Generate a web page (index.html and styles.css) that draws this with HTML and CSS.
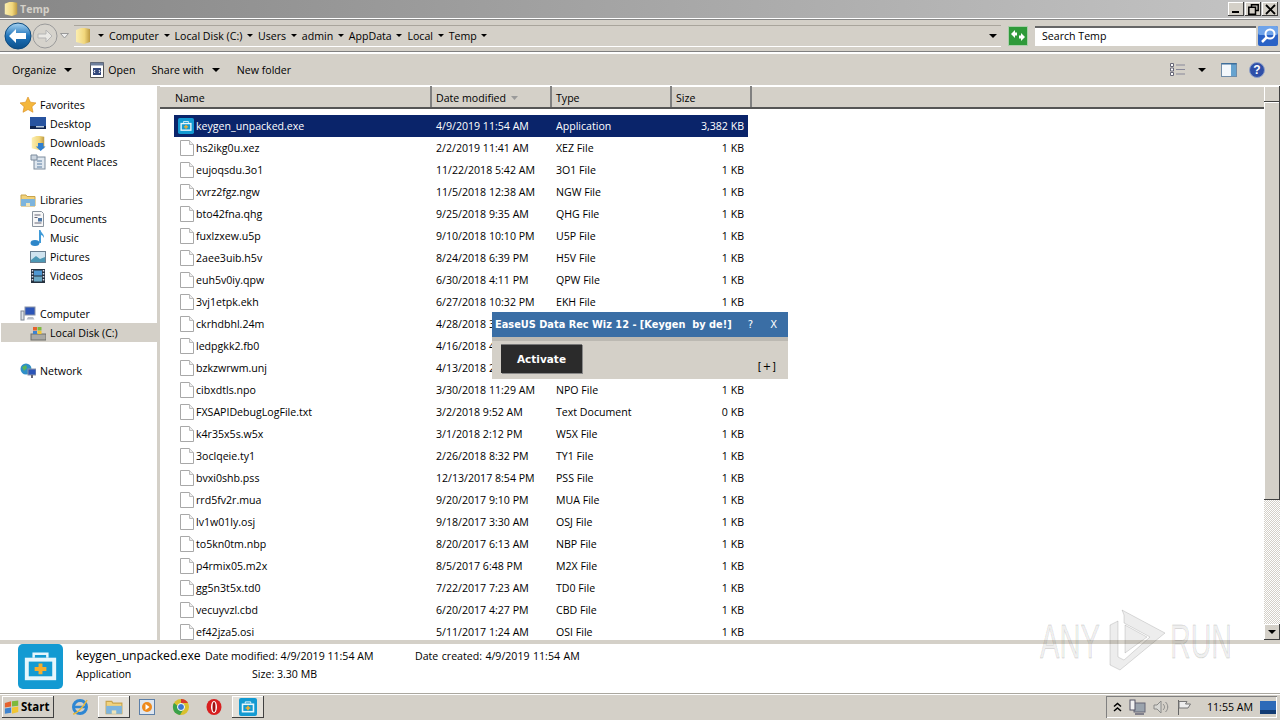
FILE: index.html
```html
<!DOCTYPE html>
<html lang="en">
<head>
<meta charset="utf-8">
<title>Temp</title>
<link rel="stylesheet" href="styles.css">
</head>
<body>
<svg class="defs" width="0" height="0">
  <defs>
    <linearGradient id="backfill" x1="0" y1="0" x2="0" y2="1"><stop offset="0" stop-color="#a9d4f2"/><stop offset=".5" stop-color="#1f74bb"/><stop offset="1" stop-color="#0c4f8a"/></linearGradient>
    <linearGradient id="folderfill" x1="0" y1="0" x2="1" y2="0"><stop offset="0" stop-color="#fbeeb0"/><stop offset=".6" stop-color="#f2d77c"/><stop offset="1" stop-color="#bd9a42"/></linearGradient>
    <symbol id="file" viewBox="0 0 14 16"><path d="M.5.5h9l4 4v11H.5z" fill="#fff" stroke="#a8a8a8"/><path d="M9.5.5v4h4" fill="#eee" stroke="#bbb"/></symbol>
    <symbol id="app" viewBox="0 0 46 46"><rect width="46" height="46" rx="5" fill="#139ad2"/><path d="M16 14v-4h14v4" fill="none" stroke="#e6f6fc" stroke-width="2.5"/><rect x="7" y="14" width="32" height="23" fill="#e6f6fc"/><rect x="11" y="18" width="24" height="15" fill="#139ad2"/><path d="M21 20h4v3.500h4v4h-4V31h-4v-3.500h-4v-4h4z" fill="#f5ad2c"/></symbol>
    <symbol id="folder" viewBox="0 0 16 18"><path d="M1 3l5-2h4l5 1v13l-6 2-8-2z" fill="url(#folderfill)"/></symbol>
  </defs>
</svg>
<div class="window">
  <header class="title">
    <div class="title-left"><svg class="i16" viewBox="0 0 16 18"><use href="#folder"/></svg><span>Temp</span></div>
    <div class="winbtns">
      <span class="winbtn"><i class="min"></i></span>
      <span class="winbtn"><svg width="11" height="11" viewBox="0 0 11 11"><path d="M3.500 2.500V.8h6.700v5.700H8M.8 3.300h6.700v6.900H.8z" fill="none" stroke="#000" stroke-width="1.500"/></svg></span>
      <span class="winbtn"><svg width="11" height="11" viewBox="0 0 11 11"><path d="M1 1l9 9M10 1l-9 9" stroke="#000" stroke-width="1.800"/></svg></span>
    </div>
  </header>
  <div class="address">
    <svg class="back" width="30" height="30" viewBox="0 0 30 30"><circle cx="15" cy="15" r="13" fill="url(#backfill)" stroke="#0d4a7e"/><path d="M6 15l7-7v4h10v6H13v4z" fill="#fff"/></svg>
    <svg class="fwd" width="26" height="26" viewBox="0 0 26 26"><circle cx="13" cy="13" r="12" fill="#d6d3cc" stroke="#9a9a9a"/><path d="M20 13l-6-6v4H6v4h8v4z" fill="#e9e8e4" stroke="#b5b5b5"/></svg>
    <svg class="hist" width="9" height="6" viewBox="0 0 9 6"><path d="M.5.500h8L4.500 5z" fill="#eee" stroke="#999"/></svg>
    <div class="crumbs">
      <svg class="crumb-icon" viewBox="0 0 16 18"><use href="#folder"/></svg>
      <nav class="crumb-list">
        <span class="crumb"><b class="tri"></b>Computer</span>
        <span class="crumb"><b class="tri"></b>Local Disk (C:)</span>
        <span class="crumb"><b class="tri"></b>Users</span>
        <span class="crumb"><b class="tri"></b>admin</span>
        <span class="crumb"><b class="tri"></b>AppData</span>
        <span class="crumb"><b class="tri"></b>Local</span>
        <span class="crumb"><b class="tri"></b>Temp</span>
        <span class="crumb"><b class="tri"></b></span>
      </nav>
      <b class="tri large addr-drop"></b>
    </div>
    <svg class="refresh" width="20" height="20" viewBox="0 0 20 20"><rect x=".5" y=".5" width="19" height="19" fill="#2f9a3a" stroke="#a9cfa9"/><path d="M3 8l4-4v2.500h2v3H7V12zM17 11l-4 4v-2.500h-2v-3h2V7z" fill="#fff"/></svg>
    <div class="search">Search Temp</div>
    <svg class="search-btn" width="20" height="20" viewBox="0 0 20 20"><rect width="20" height="20" rx="2" fill="#2a62c6"/><rect width="20" height="9" rx="2" fill="#6fa4ea"/><circle cx="12" cy="8" r="4.500" fill="none" stroke="#fff" stroke-width="2"/><path d="M9 11l-5 5" stroke="#fff" stroke-width="2.500"/></svg>
  </div>
  <div class="toolbar">
    <div class="tool"><span>Organize</span><b class="tri large"></b></div>
    <div class="tool open"><svg width="16" height="18" viewBox="0 0 16 18"><path d="M1.500 1.500h13v15h-13z" fill="#fff" stroke="#555"/><path d="M1.500 1.500h13v3h-13z" fill="#6e7f9c"/><rect x="4" y="7" width="8" height="7" fill="#33477a"/><path d="M6 9l-1 1.500L6 12M10 9l1 1.500L10 12" stroke="#fff" fill="none"/></svg><span>Open</span></div>
    <div class="tool"><span>Share with</span><b class="tri large"></b></div>
    <div class="tool"><span>New folder</span></div>
    <div class="tool-right">
      <svg width="16" height="13" viewBox="0 0 16 13"><path d="M.5.500h3v3h-3zM.5 5h3v3h-3zM.5 9.500h3v3h-3z" fill="#fff" stroke="#667"/><path d="M6 2h9M6 6.500h9M6 11h9" stroke="#889"/></svg>
      <b class="tri large"></b>
      <svg class="pane" width="16" height="14" viewBox="0 0 16 14"><rect x=".5" y=".5" width="15" height="13" fill="#f3f8fc" stroke="#6f8ca8"/><rect x="10" y="1" width="5" height="12" fill="#66a3cf"/><path d="M.5.500h15" stroke="#3c6d9a" stroke-width="2"/></svg>
      <svg width="16" height="16" viewBox="0 0 16 16"><circle cx="8" cy="8" r="7.500" fill="#2f4fa8" stroke="#8ea0c8"/><text x="8" y="12" text-anchor="middle" class="help">?</text></svg>
    </div>
  </div>
  <main class="body">
    <aside class="nav">
      <section class="nav-group">
        <div class="nav-head"><svg class="i16" viewBox="0 0 16 16"><path d="M8 0l2.400 5.200 5.600.7-4.100 3.800 1.100 5.600L8 12.500l-5 2.800 1.100-5.600L0 5.900l5.600-.7z" fill="#f4b73c" stroke="#d98a1a" stroke-width=".6"/></svg>Favorites</div>
        <div class="nav-item"><svg class="i16" viewBox="0 0 16 16"><rect y="1" width="16" height="12" fill="#27539f"/><rect y="10" width="16" height="3" fill="#10254f"/><rect x="6" y="10" width="8" height="1.500" fill="#bcd"/></svg>Desktop</div>
        <div class="nav-item"><svg class="i16" viewBox="0 0 16 18"><use href="#folder"/><path d="M8 9h6v4h2.500L11 18l-5.500-5H8z" fill="#2f7fd0"/></svg>Downloads</div>
        <div class="nav-item"><svg class="i16" viewBox="0 0 16 16"><rect x="4" y="3" width="11" height="12" fill="#dfe7ef" stroke="#7d8c9d"/><path d="M1 1h6v5H1z" fill="#cdd6e0" stroke="#7d8c9d"/><path d="M7 7h5M7 10h5M7 13h5" stroke="#5b7ca0"/></svg>Recent Places</div>
      </section>
      <section class="nav-group">
        <div class="nav-head"><svg class="i16" viewBox="0 0 16 16"><path d="M1 3h5l1 1.500h8V14H1z" fill="#f1d27c" stroke="#c8a44c"/><path d="M1 7h14v7H1z" fill="#7db4dd"/><path d="M6 14v-3h4v3" fill="#efe4b8"/></svg>Libraries</div>
        <div class="nav-item"><svg class="i16" viewBox="0 0 16 16"><path d="M2.500.5h9l2 2v13h-11z" fill="#f7f7f7" stroke="#8b949e"/><path d="M4.500 4h6M4.500 6.500h3M4.500 12h7" stroke="#667"/><rect x="8" y="7" width="4" height="3.500" fill="#4e78a8"/></svg>Documents</div>
        <div class="nav-item"><svg class="i16" viewBox="0 0 16 16"><ellipse cx="5" cy="13" rx="4.500" ry="3" fill="#2d86c9"/><path d="M9 13V0h1.500c.5 3 4 4 3.500 8-1-2-2-3-3-3v8z" fill="#3f9ad8"/></svg>Music</div>
        <div class="nav-item"><svg class="i16" viewBox="0 0 16 16"><rect x=".5" y="2.500" width="15" height="11" fill="#cfe3ef" stroke="#6b7f90"/><path d="M1 11l5-4 4 3 5-2v5H1z" fill="#4d98b5"/></svg>Pictures</div>
        <div class="nav-item"><svg class="i16" viewBox="0 0 16 16"><rect x="1" y="1" width="14" height="14" fill="#25313f"/><rect x="4" y="2.500" width="8" height="5" fill="#4f97d1"/><rect x="4" y="8.500" width="8" height="5" fill="#6aa7c4"/><path d="M2.500 2v12M13.500 2v12" stroke="#dde" stroke-width="1.500" stroke-dasharray="1.500 1.500"/></svg>Videos</div>
      </section>
      <section class="nav-group">
        <div class="nav-head"><svg class="i16" viewBox="0 0 16 16"><rect x="5" y="1" width="10" height="8" fill="#2c55b8" stroke="#8a93a6"/><path d="M8 11h5l1.500 2.500h-8z" fill="#b8bec8"/><rect x="1" y="5" width="3" height="9" fill="#dfe3e8" stroke="#7d8694"/></svg>Computer</div>
        <div class="nav-item selected"><svg class="i16" viewBox="0 0 16 16"><rect x="1" y="9" width="15" height="6" fill="#a9a9a5" stroke="#6e6e6a"/><rect x="3" y="2" width="4" height="3.500" fill="#e5622e"/><rect x="7.500" y="2" width="4" height="3.500" fill="#7db93c"/><rect x="3" y="6" width="4" height="3" fill="#3d83cf"/><rect x="7.500" y="6" width="4" height="3" fill="#f1c531"/></svg>Local Disk (C:)</div>
      </section>
      <section class="nav-group">
        <div class="nav-head"><svg class="i16" viewBox="0 0 16 16"><circle cx="6" cy="6" r="5.500" fill="#2f8fc8"/><path d="M2 4l4-2 1 3-3 3z" fill="#5ab55a"/><rect x="8" y="6" width="8" height="6" fill="#2c55b8" stroke="#8a93a6"/><path d="M12 12v3" stroke="#667" stroke-width="2"/></svg>Network</div>
      </section>
    </aside>
    <div class="splitter"></div>
    <section class="files">
      <div class="files-main">
        <div class="columns">
          <div class="col c-name">Name</div>
          <div class="col c-date">Date modified<svg class="sort" width="7" height="4" viewBox="0 0 7 4"><path d="M0 0h7L3.500 4z" fill="#9a9a9a"/></svg></div>
          <div class="col c-type">Type</div>
          <div class="col c-size">Size</div>
          <div class="col c-rest"></div>
        </div>
        <div class="rows">
          <div class="row active"><div class="c-name cell"><svg class="ficon" viewBox="0 0 46 46"><use href="#app"/></svg>keygen_unpacked.exe</div><div class="c-date cell">4/9/2019 11:54 AM</div><div class="c-type cell">Application</div><div class="c-size cell num">3,382 KB</div></div>
          <div class="row"><div class="c-name cell"><svg class="ficon doc" viewBox="0 0 14 16"><use href="#file"/></svg>hs2ikg0u.xez</div><div class="c-date cell">2/2/2019 11:41 AM</div><div class="c-type cell">XEZ File</div><div class="c-size cell num">1 KB</div></div>
          <div class="row"><div class="c-name cell"><svg class="ficon doc" viewBox="0 0 14 16"><use href="#file"/></svg>eujoqsdu.3o1</div><div class="c-date cell">11/22/2018 5:42 AM</div><div class="c-type cell">3O1 File</div><div class="c-size cell num">1 KB</div></div>
          <div class="row"><div class="c-name cell"><svg class="ficon doc" viewBox="0 0 14 16"><use href="#file"/></svg>xvrz2fgz.ngw</div><div class="c-date cell">11/5/2018 12:38 AM</div><div class="c-type cell">NGW File</div><div class="c-size cell num">1 KB</div></div>
          <div class="row"><div class="c-name cell"><svg class="ficon doc" viewBox="0 0 14 16"><use href="#file"/></svg>bto42fna.qhg</div><div class="c-date cell">9/25/2018 9:35 AM</div><div class="c-type cell">QHG File</div><div class="c-size cell num">1 KB</div></div>
          <div class="row"><div class="c-name cell"><svg class="ficon doc" viewBox="0 0 14 16"><use href="#file"/></svg>fuxlzxew.u5p</div><div class="c-date cell">9/10/2018 10:10 PM</div><div class="c-type cell">U5P File</div><div class="c-size cell num">1 KB</div></div>
          <div class="row"><div class="c-name cell"><svg class="ficon doc" viewBox="0 0 14 16"><use href="#file"/></svg>2aee3uib.h5v</div><div class="c-date cell">8/24/2018 6:39 PM</div><div class="c-type cell">H5V File</div><div class="c-size cell num">1 KB</div></div>
          <div class="row"><div class="c-name cell"><svg class="ficon doc" viewBox="0 0 14 16"><use href="#file"/></svg>euh5v0iy.qpw</div><div class="c-date cell">6/30/2018 4:11 PM</div><div class="c-type cell">QPW File</div><div class="c-size cell num">1 KB</div></div>
          <div class="row"><div class="c-name cell"><svg class="ficon doc" viewBox="0 0 14 16"><use href="#file"/></svg>3vj1etpk.ekh</div><div class="c-date cell">6/27/2018 10:32 PM</div><div class="c-type cell">EKH File</div><div class="c-size cell num">1 KB</div></div>
          <div class="row"><div class="c-name cell"><svg class="ficon doc" viewBox="0 0 14 16"><use href="#file"/></svg>ckrhdbhl.24m</div><div class="c-date cell">4/28/2018 3:15 PM</div><div class="c-type cell">24M File</div><div class="c-size cell num">1 KB</div></div>
          <div class="row"><div class="c-name cell"><svg class="ficon doc" viewBox="0 0 14 16"><use href="#file"/></svg>ledpgkk2.fb0</div><div class="c-date cell">4/16/2018 4:20 PM</div><div class="c-type cell">FB0 File</div><div class="c-size cell num">1 KB</div></div>
          <div class="row"><div class="c-name cell"><svg class="ficon doc" viewBox="0 0 14 16"><use href="#file"/></svg>bzkzwrwm.unj</div><div class="c-date cell">4/13/2018 2:05 PM</div><div class="c-type cell">UNJ File</div><div class="c-size cell num">1 KB</div></div>
          <div class="row"><div class="c-name cell"><svg class="ficon doc" viewBox="0 0 14 16"><use href="#file"/></svg>cibxdtls.npo</div><div class="c-date cell">3/30/2018 11:29 AM</div><div class="c-type cell">NPO File</div><div class="c-size cell num">1 KB</div></div>
          <div class="row"><div class="c-name cell"><svg class="ficon doc" viewBox="0 0 14 16"><use href="#file"/></svg>FXSAPIDebugLogFile.txt</div><div class="c-date cell">3/2/2018 9:52 AM</div><div class="c-type cell">Text Document</div><div class="c-size cell num">0 KB</div></div>
          <div class="row"><div class="c-name cell"><svg class="ficon doc" viewBox="0 0 14 16"><use href="#file"/></svg>k4r35x5s.w5x</div><div class="c-date cell">3/1/2018 2:12 PM</div><div class="c-type cell">W5X File</div><div class="c-size cell num">1 KB</div></div>
          <div class="row"><div class="c-name cell"><svg class="ficon doc" viewBox="0 0 14 16"><use href="#file"/></svg>3oclqeie.ty1</div><div class="c-date cell">2/26/2018 8:32 PM</div><div class="c-type cell">TY1 File</div><div class="c-size cell num">1 KB</div></div>
          <div class="row"><div class="c-name cell"><svg class="ficon doc" viewBox="0 0 14 16"><use href="#file"/></svg>bvxi0shb.pss</div><div class="c-date cell">12/13/2017 8:54 PM</div><div class="c-type cell">PSS File</div><div class="c-size cell num">1 KB</div></div>
          <div class="row"><div class="c-name cell"><svg class="ficon doc" viewBox="0 0 14 16"><use href="#file"/></svg>rrd5fv2r.mua</div><div class="c-date cell">9/20/2017 9:10 PM</div><div class="c-type cell">MUA File</div><div class="c-size cell num">1 KB</div></div>
          <div class="row"><div class="c-name cell"><svg class="ficon doc" viewBox="0 0 14 16"><use href="#file"/></svg>lv1w01ly.osj</div><div class="c-date cell">9/18/2017 3:30 AM</div><div class="c-type cell">OSJ File</div><div class="c-size cell num">1 KB</div></div>
          <div class="row"><div class="c-name cell"><svg class="ficon doc" viewBox="0 0 14 16"><use href="#file"/></svg>to5kn0tm.nbp</div><div class="c-date cell">8/20/2017 6:13 AM</div><div class="c-type cell">NBP File</div><div class="c-size cell num">1 KB</div></div>
          <div class="row"><div class="c-name cell"><svg class="ficon doc" viewBox="0 0 14 16"><use href="#file"/></svg>p4rmix05.m2x</div><div class="c-date cell">8/5/2017 6:48 PM</div><div class="c-type cell">M2X File</div><div class="c-size cell num">1 KB</div></div>
          <div class="row"><div class="c-name cell"><svg class="ficon doc" viewBox="0 0 14 16"><use href="#file"/></svg>gg5n3t5x.td0</div><div class="c-date cell">7/22/2017 7:23 AM</div><div class="c-type cell">TD0 File</div><div class="c-size cell num">1 KB</div></div>
          <div class="row"><div class="c-name cell"><svg class="ficon doc" viewBox="0 0 14 16"><use href="#file"/></svg>vecuyvzl.cbd</div><div class="c-date cell">6/20/2017 4:27 PM</div><div class="c-type cell">CBD File</div><div class="c-size cell num">1 KB</div></div>
          <div class="row"><div class="c-name cell"><svg class="ficon doc" viewBox="0 0 14 16"><use href="#file"/></svg>ef42jza5.osi</div><div class="c-date cell">5/11/2017 1:24 AM</div><div class="c-type cell">OSI File</div><div class="c-size cell num">1 KB</div></div>
        </div>
      </div>
      <div class="scrollbar">
        <div class="sb-btn"><b class="tri up"></b></div>
        <div class="sb-thumb"></div>
        <div class="sb-track"></div>
        <div class="sb-btn"><b class="tri large"></b></div>
      </div>
    </section>
  </main>
  <div class="details">
    <svg class="details-icon" viewBox="0 0 46 46"><use href="#app"/></svg>
    <div class="details-col d-name"><div class="d-title">keygen_unpacked.exe</div><div>Application</div></div>
    <div class="details-col d-meta"><div>Date modified: 4/9/2019 11:54 AM</div><div class="d-size">Size: 3.30 MB</div></div>
    <div class="details-col d-created"><div>Date created: 4/9/2019 11:54 AM</div></div>
  </div>
</div>
<footer class="taskbar">
  <div class="start"><svg width="16" height="15" viewBox="0 0 18 16"><path d="M1 3l7-2v6l-7 1z" fill="#e5622e"/><path d="M9 1l7-1v6l-7 1z" fill="#7db93c"/><path d="M1 9l7-1v6l-7 1z" fill="#3d83cf"/><path d="M9 8l7-1v6l-7 2z" fill="#f1c531"/></svg><span>Start</span></div>
  <div class="task"><svg width="18" height="18" viewBox="0 0 18 18"><circle cx="9" cy="9" r="6.500" fill="none" stroke="#2d86d3" stroke-width="3"/><path d="M3 9h12" stroke="#2d86d3" stroke-width="2.500"/><path d="M2 16c3 0 10-6 14-14" stroke="#e8b93a" fill="none" stroke-width="1.500"/></svg></div>
  <div class="task raised"><svg width="18" height="18" viewBox="0 0 16 16"><path d="M1 3h5l1 1.500h8V14H1z" fill="#f1d27c" stroke="#c8a44c"/><path d="M1 7h14v7H1z" fill="#7db4dd"/><path d="M6 14v-3h4v3" fill="#efe4b8"/></svg></div>
  <div class="task"><svg width="18" height="18" viewBox="0 0 18 18"><rect x="1.500" y="1.500" width="15" height="15" fill="#dfe6ef" stroke="#5c7fa8"/><circle cx="9" cy="9" r="5" fill="#ee8a1d"/><path d="M7.500 6l4 3-4 3z" fill="#fff"/></svg></div>
  <div class="task"><svg width="18" height="18" viewBox="0 0 18 18"><circle cx="9" cy="9" r="8" fill="#d9c02e"/><path d="M9 1a8 8 0 0 1 7 4H9z" fill="#d8392c"/><path d="M2 5a8 8 0 0 0 6 12l3-5z" fill="#3ba14a"/><circle cx="9" cy="9" r="3.500" fill="#3a78d0" stroke="#fff"/></svg></div>
  <div class="task"><svg width="18" height="18" viewBox="0 0 18 18"><ellipse cx="9" cy="9" rx="7.500" ry="8" fill="#d81f1f"/><ellipse cx="9" cy="9" rx="3" ry="6" fill="#fff"/><ellipse cx="9" cy="9" rx="1.500" ry="5" fill="#a01010"/></svg></div>
  <div class="task raised"><svg width="18" height="18" viewBox="0 0 46 46"><use href="#app"/></svg></div>
  <div class="tray">
    <svg width="9" height="10" viewBox="0 0 9 10"><path d="M1 4.500l3.500-3 3.500 3M1 9l3.500-3 3.500 3" fill="none" stroke="#000" stroke-width="1.500"/></svg>
    <svg class="t1" width="17" height="16" viewBox="0 0 17 16"><rect x="5" y="4" width="11" height="9" fill="#9aa3ad" stroke="#667"/><rect x="1" y="1" width="5" height="10" fill="#f2f2f2" stroke="#556"/><path d="M6 15h9" stroke="#667" stroke-width="1.500"/></svg>
    <svg class="t2" width="16" height="14" viewBox="0 0 16 14"><path d="M1 5h3l4-4v12l-4-4H1z" fill="#d8d8d4" stroke="#8a8a88"/><path d="M10 4c2 2 2 4 0 6M12.500 2c3 3 3 7 0 10" fill="none" stroke="#8a8a88"/></svg>
    <svg class="t3" width="16" height="15" viewBox="0 0 16 15"><path d="M1.500 0v15" stroke="#666"/><path d="M2 1.500h8l-1.500 2.500 5 0 L11 8H2z" fill="#eee" stroke="#777"/></svg>
    <span class="clock">11:55 AM</span>
    <svg width="16" height="13" viewBox="0 0 16 13"><rect width="16" height="13" fill="#2d6ab8"/><rect y="9" width="16" height="4" fill="#123b73"/></svg>
  </div>
</footer>
<aside class="dialog">
  <div class="dlg-title"><span>EaseUS Data Rec Wiz 12 - [Keygen&nbsp; by de!]</span><span class="dlg-q">?</span><span class="dlg-x">X</span></div>
  <div class="dlg-body"><div class="activate">Activate</div><span class="plus">[+]</span></div>
</aside>
<svg class="watermark" width="240" height="76" viewBox="0 0 240 76">
  <text x="4" y="58" class="wm" textLength="60" lengthAdjust="spacingAndGlyphs">ANY</text>
  <path class="wm-logo" d="M86 10l43 23-45 37-10-5V25l8-4v36l6 3 26-23-26-14v-8zM89 25l22 12-22 16z"/>
  <text x="134" y="58" class="wm" textLength="62" lengthAdjust="spacingAndGlyphs">RUN</text>
</svg>
</body>
</html>
```
FILE: styles.css
```css
* { box-sizing: border-box; }
html, body { margin: 0; height: 100%; }
body {
  width: 1280px; height: 720px; overflow: hidden; position: relative;
  display: flex; flex-direction: column; background: #fff; color: #000;
  font: 10.6px/14px "Open Sans", "Liberation Sans", sans-serif;
}
.defs { position: absolute; }
svg { flex: none; display: block; }
.i16 { width: 16px; height: 16px; }

.window { height: 693px; display: flex; flex-direction: column; }

.title {
  height: 18px; flex: none; display: flex; justify-content: space-between;
  background: linear-gradient(90deg, #878787, #c4c4c4);
  color: #d4d0c8; font-weight: 700; padding: 0 2px 0 3px;
}
.title-left { display: flex; align-items: center; gap: 1px; }
.winbtns { display: flex; gap: 1px; padding-top: 2px; }
.winbtn {
  width: 16px; height: 14px; background: #d4d0c8; display: flex; align-items: center; justify-content: center;
  box-shadow: inset -1px -1px #404040, inset 1px 1px #fff;
}
.min { width: 7px; height: 2px; background: #000; margin-top: 6px; margin-right: 2px; }

.address {
  height: 36px; flex: none; display: flex; align-items: center; background: #d4d0c8; padding: 0 0 0 3px;
  border-top: 1px solid #fff; border-bottom: 2px solid #fff;
  box-shadow: inset 0 1px #888, inset 0 -1px #808080;
}
.fwd { margin-left: -1px; }
.hist { margin-left: 2px; margin-right: 5px; }
.crumbs {
  width: 927px; height: 22px; display: flex; align-items: center; padding: 0 0 0 1px;
  border-top: 1px solid #a9a59c; border-bottom: 1px solid #fff;
}
.crumb-icon { width: 16px; height: 18px; }
.crumb-list { display: flex; margin-left: 7px; flex: 1; }
.crumb { display: flex; align-items: center; margin-right: 4.7px; white-space: nowrap; }
.tri { display: block; width: 0; height: 0; border: 3px solid transparent; border-top: 3px solid #000; border-bottom: 0; margin-right: 5px; }
.tri.large { border-width: 4px 4px 0; border-top-color: #000; margin: 0; }
.tri.up { border-width: 0 4px 4px; border-color: transparent transparent #000; margin: 0; }
.tri.large.addr-drop { margin-right: 4px; }
.refresh { margin-left: 7px; }
.search {
  width: 221px; height: 20px; margin-left: 7px; padding: 0 7px; background: #fff;
  border-top: 2px solid #666; line-height: 17px;
}
.search-btn { margin-left: 2px; }

.toolbar {
  height: 31px; flex: none; display: flex; align-items: center; background: #d4d0c8; padding: 0 15px 0 12px;
}
.tool { display: flex; align-items: center; gap: 8px; margin-right: 17px; }
.tool.open { gap: 3px; margin-right: 16px; }
.tool-right { margin-left: auto; display: flex; align-items: center; }
.tool-right .tri { margin: 0 15px 0 12px; }
.tool-right .pane { margin-right: 12px; }
.help { font: bold 12px "Liberation Sans", sans-serif; fill: #fff; }

.body { flex: 1; min-height: 0; display: flex; border-top: 1px solid #fff; }
.nav { width: 157px; flex: none; padding-top: 9px; background: #fff; overflow: hidden; }
.nav-group { margin-bottom: 19px; }
.nav-head, .nav-item { height: 19px; display: flex; align-items: center; gap: 4px; }
.nav-head { padding-left: 20px; }
.nav-item { padding-left: 30px; }
.nav-item.selected { background: #d4d0c8; margin-left: 1px; padding-left: 29px; }
.splitter { width: 3px; flex: none; background: #d4d0c8; }

.files { flex: 1; min-width: 0; display: flex; }
.files-main { flex: 1; min-width: 0; display: flex; flex-direction: column; overflow: hidden; }
.columns { height: 23px; flex: none; display: flex; background: #d4d0c8; border-bottom: 2px solid #555; }
.col { height: 21px; display: flex; align-items: center; gap: 5px; padding: 3px 0 0 4px; border-right: 2px solid; border-right-color: #808080; box-shadow: inset 0 1px #fff; }
.col.c-name { padding-left: 15px; }
.col.c-rest { flex: 1; border: 0; }
.c-name { width: 272px; }
.c-date { width: 120px; }
.c-type { width: 120px; }
.c-size { width: 80px; }
.rows { padding-top: 6px; padding-left: 14px; }
.row { height: 22px; display: flex; width: 574px; }
.cell { display: flex; align-items: center; white-space: nowrap; padding-left: 4px; }
.row .c-name { width: 258px; gap: 2px; padding-left: 4px; }
.row .c-date { width: 120px; padding-left: 4px; }
.row .c-type { width: 120px; padding-left: 4px; }
.row .c-size { width: 76px; justify-content: flex-end; padding-right: 4px; }
.ficon { width: 16px; height: 16px; }
.ficon.doc { width: 14px; height: 16px; margin: 0 0 0 2px; }
.row.active { background: #0a246a; color: #fff; }

.scrollbar { width: 16px; flex: none; display: flex; flex-direction: column; background: repeating-conic-gradient(#d4d0c8 0 25%, #fff 0 50%) 0 0 / 2px 2px; }
.sb-btn { height: 16px; flex: none; display: flex; align-items: center; justify-content: center; background: #d4d0c8; box-shadow: inset -1px -1px #404040, inset 1px 1px #fff; }
.sb-thumb { height: 398px; flex: none; background: #d4d0c8; box-shadow: inset -1px -1px #404040, inset 1px 1px #fff; }
.sb-track { flex: 1; }

.details {
  height: 53px; flex: none; display: flex; background: #fff; align-items: flex-start;
  border-top: 4px solid #d4d0c8;
}
.details-icon { width: 45px; height: 45px; margin: 0 0 0 18px; flex: none; }
.details-col div { height: 18px; line-height: 18px; white-space: nowrap; }
.details-col { padding-top: 3px; }
.d-name { margin-left: 13px; width: 129px; }
.d-title { font-size: 12.2px; }
.d-meta { width: 210px; }
.d-size { padding-left: 47px; }
.d-created { word-spacing: .7px; }

.taskbar {
  height: 27px; flex: none; display: flex; align-items: flex-start; background: #d4d0c8;
  border-top: 1px solid #aaa79f; padding: 2px 3px 0 2px; box-shadow: inset 0 1px #fff;
}
.start {
  width: 52px; height: 22px; display: flex; align-items: center; gap: 1px; padding-left: 2px; font-weight: 700; font-size: 11.5px;
  box-shadow: inset -1px -1px #404040, inset 1px 1px #fff;
}
.task { width: 32px; height: 22px; display: flex; align-items: center; justify-content: center; margin-right: 1.5px; }
.start + .task { margin-left: 10px; }
.task.raised { box-shadow: inset -1px -1px #404040, inset 1px 1px #fff; background: #e4e1da; }
.tray {
  margin-left: auto; width: 171px; height: 22px; display: flex; align-items: center; padding: 0 1px 0 7px;
  box-shadow: inset 1px 1px #808080, inset -1px -1px #fff;
}
.t1 { margin-left: 7px; }
.t2 { margin-left: 7px; }
.t3 { margin-left: 8px; }
.clock { width: 46px; margin-left: 14px; margin-right: 7px; white-space: nowrap; }

.dialog { position: absolute; left: 492px; top: 312px; width: 296px; height: 67px; background: #d4d0c8; }
.dlg-title {
  height: 25px; background: #3a6ea5; color: #fff; display: flex; align-items: center; padding: 1px 0 0 3px;
  font-family: "DejaVu Sans", sans-serif; font-weight: 700; font-size: 9.8px; white-space: nowrap;
}
.dlg-q { margin-left: auto; font-weight: 400; font-size: 10px; }
.dlg-x { margin-left: 17px; margin-right: 11px; font-weight: 400; font-size: 10px; }
.dlg-body { height: 42px; display: flex; align-items: flex-start; justify-content: space-between; padding: 3px 11px 0 9px; border-top: 4px solid #bcb9b2; }
.activate {
  width: 81px; height: 29px; background: #2b2b2b; color: #fff; font-weight: 700; font-size: 10.5px; display: flex; align-items: center; justify-content: center;
  font-family: "DejaVu Sans", sans-serif; box-shadow: 1px 1px #888, inset 0 1px #777;
}
.plus { font-family: "DejaVu Sans", sans-serif; font-size: 10px; margin-top: 16px; letter-spacing: 1px; }

.watermark { position: absolute; left: 1036px; top: 600px; pointer-events: none; }
.wm { font: 49px "Liberation Sans", sans-serif; fill: rgba(0,0,0,.07); stroke: rgba(0,0,0,.13); stroke-width: 1; }
.wm-logo { fill: rgba(0,0,0,.07); stroke: rgba(0,0,0,.13); stroke-width: 1; fill-rule: evenodd; }
```
